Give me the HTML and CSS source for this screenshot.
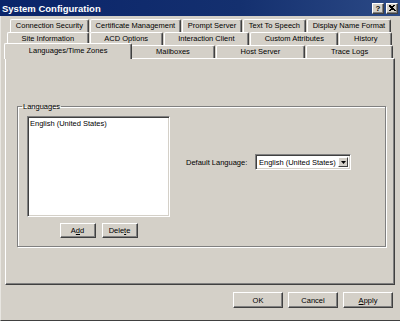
FILE: index.html
```html
<!DOCTYPE html>
<html lang="en">
<head>
    <meta charset="UTF-8">
    <title>System Configuration</title>
    <link rel="stylesheet" href="styles.css">
</head>
<body>
    <div class="window">
        <div class="titlebar">
            <span class="title">System Configuration</span>
            <div class="caption-btns">
                <span class="cbtn">?</span>
                <span class="cbtn close">
                    <svg width="8" height="7" viewBox="0 0 8 7"><path d="M1 0h2v1h2V0h2v1h-1v1h-1v1h1v1h1v1h1v1h-2V5H3v1H1V5h1V4h1V3H2V2H1z" fill="#000"/></svg>
                </span>
            </div>
        </div>

        <div class="content">
            <div class="tabs">
                <div class="tab-row r1">
                    <div class="tab">Connection Security</div>
                    <div class="tab">Certificate Management</div>
                    <div class="tab">Prompt Server</div>
                    <div class="tab">Text To Speech</div>
                    <div class="tab">Display Name Format</div>
                </div>
                <div class="tab-row r2">
                    <div class="tab">Site Information</div>
                    <div class="tab">ACD Options</div>
                    <div class="tab">Interaction Client</div>
                    <div class="tab">Custom Attributes</div>
                    <div class="tab">History</div>
                </div>
                <div class="tab-row r3">
                    <div class="tab active">Languages/Time Zones</div>
                    <div class="tab">Mailboxes</div>
                    <div class="tab">Host Server</div>
                    <div class="tab">Trace Logs</div>
                </div>
            </div>

            <div class="panel">
                <fieldset class="group">
                    <legend>Languages</legend>
                    <div class="group-body">
                        <div class="list-col">
                            <div class="listbox">
                                <div class="list-item">English (United States)</div>
                            </div>
                            <div class="list-buttons">
                                <button class="btn small">A<u>d</u>d</button>
                                <button class="btn small">Dele<u>t</u>e</button>
                            </div>
                        </div>
                        <div class="default-lang">
                            <span class="label">Default Language:</span>
                            <div class="combo">
                                <span class="combo-text">English (United States)</span>
                                <span class="combo-btn">
                                    <svg width="5" height="3" viewBox="0 0 5 3"><path d="M0 0h5L2.5 3z" fill="#000"/></svg>
                                </span>
                            </div>
                        </div>
                    </div>
                </fieldset>
            </div>

            <div class="footer">
                <button class="btn">OK</button>
                <button class="btn">Cancel</button>
                <button class="btn"><u>A</u>pply</button>
            </div>
        </div>
    </div>
</body>
</html>
```

FILE: styles.css
```css
body {
    margin: 0;
    background-color: #d4d0c8;
    font-family: 'Liberation Sans', Arial, sans-serif;
    font-size: 7.5px;
    color: #000;
}

.window {
    width: 400px;
    height: 321px;
    box-sizing: border-box;
    border-left: 1px solid #e8e6e1;
    border-bottom: 1px solid #404040;
    background: #d4d0c8;
}

.titlebar {
    height: 16px;
    display: flex;
    align-items: center;
    justify-content: space-between;
    background: linear-gradient(to right, #0a246a, #14306f 60%, #2c4a86);
    color: #fff;
    padding: 0 2px 0 2px;
    margin-left: -1px;
}

.title {
    font-weight: bold;
    font-size: 9.5px;
}

.caption-btns {
    display: flex;
    gap: 2px;
}

.cbtn {
    width: 10px;
    height: 9px;
    display: flex;
    align-items: center;
    justify-content: center;
    background: #d4d0c8;
    color: #000;
    font-weight: bold;
    font-size: 8px;
    border: 1px solid;
    border-color: #fff #404040 #404040 #fff;
    box-shadow: inset -1px -1px 0 #808080;
}

.content {
    padding: 3px 5px 0 3px;
}

.tabs {
    display: flex;
    flex-direction: column;
}

.tab-row {
    display: flex;
    height: 13px;
}

.tab-row.r1 {
    margin: 0 3px 0 6px;
}

.tab-row.r2 {
    margin: 0 2px 0 3px;
}

.tab-row.r3 {
    margin: 0 1px 0 1px;
}

.tab {
    flex: 1 1 auto;
    text-align: center;
    line-height: 12px;
    height: 13px;
    box-sizing: border-box;
    border: 1px solid;
    border-color: #fff #404040 transparent #fff;
    border-bottom: none;
    border-radius: 2px 2px 0 0;
    box-shadow: inset -1px 0 0 #808080;
    margin-right: 1px;
    white-space: nowrap;
    padding: 0 4px;
}

.tab.active {
    position: relative;
    z-index: 1;
    height: 16px;
    margin: -2px -1px -1px -1px;
    line-height: 14px;
    background: #d4d0c8;
}

.panel {
    height: 227px;
    box-sizing: border-box;
    border: 1px solid;
    border-color: #fff #404040 #404040 #fff;
    box-shadow: inset -1px -1px 0 #808080;
    margin-left: 1px;
    padding: 43px 8px 0 11px;
}

.group {
    margin: 0;
    padding: 0 9px 10px 9px;
    border: 1px solid #808080;
    box-shadow: inset 1px 1px 0 #fff, 1px 1px 0 #fff;
    height: 145px;
    box-sizing: border-box;
}

.group legend {
    padding: 0 1px;
    margin-left: -5px;
    line-height: 9px;
}

.group-body {
    display: flex;
    padding-top: 5px;
}

.list-col {
    display: flex;
    flex-direction: column;
    align-items: center;
}

.listbox {
    width: 143px;
    height: 101px;
    box-sizing: border-box;
    background: #fff;
    border: 1px solid;
    border-color: #808080 #fff #fff #808080;
    box-shadow: inset 1px 1px 0 #404040, inset -1px -1px 0 #d4d0c8;
    padding: 2px 2px;
}

.list-item {
    line-height: 9px;
}

.list-buttons {
    display: flex;
    gap: 6px;
    margin-top: 6px;
}

.btn {
    font-family: inherit;
    font-size: 7.5px;
    color: #000;
    background: #d4d0c8;
    width: 50px;
    height: 16px;
    padding: 0;
    border: 1px solid;
    border-color: #fff #404040 #404040 #fff;
    box-shadow: inset -1px -1px 0 #808080;
    cursor: pointer;
}

.btn.small {
    width: 36px;
    height: 15px;
}

.default-lang {
    display: flex;
    align-items: center;
    margin: 38px 0 0 16px;
    align-self: flex-start;
}

.label {
    width: 69px;
}

.combo {
    width: 96px;
    height: 16px;
    box-sizing: border-box;
    background: #fff;
    display: flex;
    align-items: center;
    justify-content: space-between;
    border: 1px solid;
    border-color: #808080 #fff #fff #808080;
    box-shadow: inset 1px 1px 0 #404040, inset -1px -1px 0 #d4d0c8;
    padding: 2px 2px 2px 3px;
}

.combo-btn {
    width: 10px;
    height: 10px;
    box-sizing: border-box;
    display: flex;
    align-items: center;
    justify-content: center;
    background: #d4d0c8;
    border: 1px solid;
    border-color: #fff #404040 #404040 #fff;
}

.footer {
    display: flex;
    justify-content: flex-end;
    gap: 5px;
    margin-top: 7px;
    padding-right: 2px;
}
```
